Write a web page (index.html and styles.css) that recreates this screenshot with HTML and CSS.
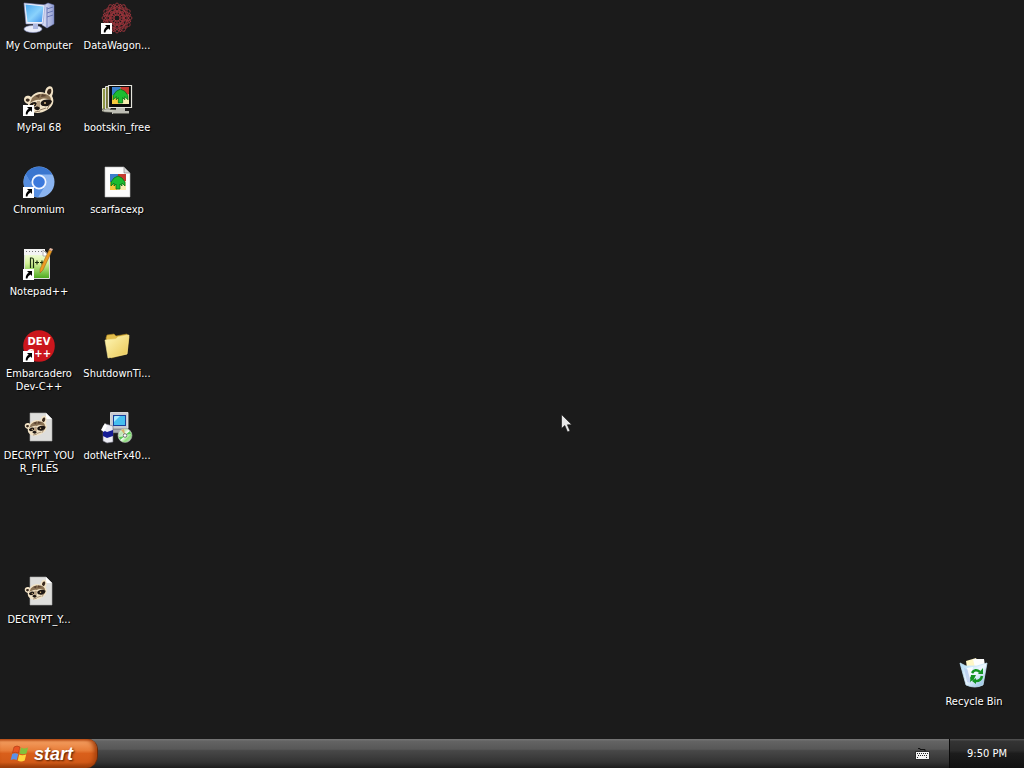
FILE: index.html
```html
<!DOCTYPE html>
<html lang="en">
<head>
<meta charset="utf-8">
<title>Desktop</title>
<link rel="stylesheet" href="styles.css">
</head>
<body>
<svg class="defs" width="0" height="0" aria-hidden="true">
  <defs>
    <linearGradient id="screen" x1="0" y1="0" x2="1" y2="1"><stop offset="0" stop-color="#4aa8f0"/><stop offset=".55" stop-color="#8ad2fc"/><stop offset="1" stop-color="#3f90ea"/></linearGradient>
    <linearGradient id="case" x1="0" y1="0" x2="1" y2="0"><stop offset="0" stop-color="#e8ebfa"/><stop offset="1" stop-color="#8f9bd0"/></linearGradient>
    <linearGradient id="folder" x1="0" y1="0" x2="1" y2="1"><stop offset="0" stop-color="#fff8b8"/><stop offset="1" stop-color="#e9c653"/></linearGradient>
    <linearGradient id="note" x1="0" y1="0" x2="0" y2="1"><stop offset="0" stop-color="#fbfff2"/><stop offset=".45" stop-color="#d6f49a"/><stop offset="1" stop-color="#4aa81c"/></linearGradient>
    <linearGradient id="bin" x1="0" y1="0" x2="1" y2="1"><stop offset="0" stop-color="#a9d8f4"/><stop offset=".5" stop-color="#eef8ff"/><stop offset="1" stop-color="#7fb4dc"/></linearGradient>
    <linearGradient id="disc" x1="0" y1="0" x2="1" y2="1"><stop offset="0" stop-color="#fafafa"/><stop offset=".3" stop-color="#b9e6b0"/><stop offset=".5" stop-color="#fff"/><stop offset=".7" stop-color="#8be079"/><stop offset="1" stop-color="#d9c6e8"/></linearGradient>
    <symbol id="shortcut" viewBox="0 0 11 11">
      <path fill="#fff" d="M0 0h11v11H0z"/>
      <path fill="#000" d="M4 2h5v5L7.500 5.500C5.500 6.600 4.800 8 4.400 9.500H2.800C2.600 7 3.500 5 5.700 3.700z"/>
    </symbol>
    <symbol id="raccoon" viewBox="0 0 32 32">
      <path fill="#f2e3c6" d="M22 9C22 4 26 1 29 3 31 6 30 10 29 12 32 17 30 23 24 26 18 30 10 30 7 26 5 24 5 22 5 20 1 19 0 15 2 13 4 11 7 12 8 13 12 8 17 7 22 9z"/>
      <path fill="#3a2a1e" d="M24 9C24 6 26 4 28 5 29 7 28 10 26 11zM3 17C2 15 4 14 6 15L7 16 5 18z"/>
      <path fill="#8b7355" d="M9 14C14 9 21 9 25 11 28 13 28 15 28 17 24 14 20 14 17 16 14 15 10 17 7 19z"/>
      <path fill="#594230" d="M12 12 17 10 16 14zM19 10 24 12 18 13z"/>
      <path fill="#1d1612" d="M18 18C21 15 26 15 29 17 28 21 25 23 21 22 18 22 17 20 18 18zM7 20C9 18 12 17 14 19 14 22 11 23 9 23 7 22 6 21 7 20z"/>
      <circle cx="22" cy="19" r="1" fill="#d9b782"/><circle cx="11" cy="20.500" r=".8" fill="#d9b782"/>
      <path fill="#b7a082" d="M14 17H17L17 23H13z"/>
      <path fill="#1d1612" d="M11 24C12 22 16 22 17 24 16 27 13 27 11 24z"/>
      <path stroke="#77604a" fill="none" stroke-width=".8" d="M17 26 23 24M12 28 17 27M27 20 24 25"/>
    </symbol>
    <symbol id="decrypt" viewBox="0 0 32 32">
      <path fill="#dededc" stroke="#aaa" stroke-width=".600" d="M7 1h16l6 6v22H7z"/>
      <path fill="#fff" d="M23 1v6h6z"/>
      <use href="#raccoon" x="1" y="2" width="24" height="24"/>
    </symbol>
    <symbol id="tree" viewBox="0 0 16 16">
      <path fill="#f7edb0" d="M0 0h16v16H0z"/>
      <path fill="#3b7fcc" d="M0 0h8v8H0z"/><path fill="#c43b30" d="M8 0h8v7H8z"/><path fill="#f5c93c" d="M0 8h7v8H0z"/>
      <path fill="#1cbc30" stroke="#087318" stroke-width=".800" d="M8 2 12 4 15 8 15 12 12 9 12 12 10 10V15H6V10L4 12 4 9 1 12 1 8 4 4z"/>
    </symbol>
  </defs>
</svg>

<main class="desktop">
  <button class="shortcut c1 r1">
    <svg class="icon" viewBox="0 0 32 32">
      <path fill="url(#case)" stroke="#6874b0" stroke-width=".500" d="M19 4 25 1 31 3V22L24 26 19 23z"/>
      <path stroke="#6a78b8" stroke-width="1" fill="none" d="M24 7 30 5M24 11 30 9M24 15 30 13M24 5V25"/>
      <path fill="#edf0fb" stroke="#8792c8" stroke-width=".600" d="M1 1 22 3 20 22 3 22z"/>
      <path fill="url(#screen)" d="M2.500 2.500 20.500 4.500 18.800 20 4.500 20z"/>
      <ellipse cx="10" cy="27" rx="9" ry="3.500" fill="#e9ecf9" stroke="#8b95c5" stroke-width=".600"/>
      <path fill="#aeb9e2" d="M10 22h5v5h-5z"/>
    </svg>
    <span class="label">My Computer</span>
  </button>
  <button class="shortcut c2 r1">
    <svg class="icon" viewBox="0 0 32 32">
      <g fill="none" stroke="#98343b" stroke-width=".900">
        <g id="petals"><ellipse cx="16" cy="8" rx="3" ry="7"/><ellipse cx="16" cy="24" rx="3" ry="7"/><ellipse cx="8" cy="16" rx="7" ry="3"/><ellipse cx="24" cy="16" rx="7" ry="3"/></g>
        <use href="#petals" transform="rotate(30 16 16)"/>
        <use href="#petals" transform="rotate(60 16 16)"/>
        <g id="squares"><path d="M6 6H26V26H6zM10 10H22V22H10z"/></g>
        <use href="#squares" transform="rotate(30 16 16)"/>
        <use href="#squares" transform="rotate(60 16 16)"/>
      </g>
      <circle cx="16" cy="16" r="3" fill="#1b1b1b" stroke="#98343b"/>
      <use href="#shortcut" x="0" y="21" width="11" height="11"/>
    </svg>
    <span class="label">DataWagon...</span>
  </button>

  <button class="shortcut c1 r2">
    <svg class="icon" viewBox="0 0 32 32"><use href="#raccoon" width="32" height="32"/><use href="#shortcut" x="0" y="21" width="11" height="11"/></svg>
    <span class="label">MyPal 68</span>
  </button>
  <button class="shortcut c2 r2">
    <svg class="icon" viewBox="0 0 32 32">
      <path fill="#8d9644" stroke="#e9e9cf" d="M1.500 4.500H7V27H1.500z"/>
      <path fill="#c8c8bc" stroke="#4e4e45" stroke-width=".600" d="M1 25 20 26 20 29 3 28z"/>
      <path fill="#77793c" stroke="#ddd" d="M4.500 2.500H9V25H4.500z"/>
      <path fill="#0a0a0a" stroke="#e4e4dc" stroke-width="1.200" d="M7.500 1.500H30.500V23.500H7.500z"/>
      <use href="#tree" x="11" y="3" width="17" height="17"/>
      <path fill="#bdbdb4" d="M15 24h9v3h4v3H11v-3h4z"/><path stroke="#66665e" d="M12 29.500h16"/>
    </svg>
    <span class="label">bootskin_free</span>
  </button>

  <button class="shortcut c1 r3">
    <svg class="icon" viewBox="0 0 32 32">
      <circle cx="16" cy="16" r="15.500" fill="#8ab4f0"/>
      <path fill="#3a76cf" d="M2.600 8.200A15.500 15.500 0 0 1 29.400 8.500H16A7.500 7.500 0 0 0 9 13.500L8.500 18z"/>
      <path fill="#568ee0" d="M2.600 8.200A15.500 15.500 0 0 0 15 31.500L22 20 10 20z"/>
      <circle cx="16" cy="16" r="7.500" fill="#f0f5ff"/><circle cx="16" cy="16" r="5.800" fill="#3b79dc"/>
      <use href="#shortcut" x="0" y="21" width="11" height="11"/>
    </svg>
    <span class="label">Chromium</span>
  </button>
  <button class="shortcut c2 r3">
    <svg class="icon" viewBox="0 0 32 32">
      <path fill="#fdfdfd" stroke="#b9b9b9" stroke-width=".600" d="M4 1h19l6 6v24H4z"/>
      <path fill="#dadada" stroke="#777" stroke-width=".600" d="M23 1v6h6z"/>
      <use href="#tree" x="9" y="8" width="16" height="16"/>
    </svg>
    <span class="label">scarfacexp</span>
  </button>

  <button class="shortcut c1 r4">
    <svg class="icon" viewBox="0 0 32 32">
      <path fill="url(#note)" stroke="#ddd" d="M1.500 2.500H21L26.500 8V30.500H1.500z"/>
      <path fill="#f4f4f4" d="M1 1h21v6H1z"/><path stroke="#777" stroke-dasharray="1 2" d="M3 3.500h20"/>
      <path fill="#fff" stroke="#888" stroke-width=".600" d="M20 2v6h6z"/>
      <path fill="none" stroke="#1b300f" stroke-width="1.200" d="M7.500 20V10H9Q10.500 10 10.500 12V20M12 14.500h4M14 12.500v4M17 14.500h4M19 12.500v4"/>
      <path fill="#ed9c23" stroke="#8c611e" stroke-width=".500" d="M26 2 29 3 20 22 17 25 17 21z"/><path fill="#e8b8a0" d="M26 2 27 0 30 1 29 3z"/>
      <use href="#shortcut" x="0" y="21" width="11" height="11"/>
    </svg>
    <span class="label">Notepad++</span>
  </button>

  <button class="shortcut c1 r5">
    <svg class="icon" viewBox="0 0 32 32">
      <circle cx="16" cy="16" r="15.800" fill="#cb161d"/>
      <text class="dev" x="16" y="15" text-anchor="middle">DEV</text>
      <text class="dev" x="16" y="27" text-anchor="middle">C++</text>
      <use href="#shortcut" x="0" y="21" width="11" height="11"/>
    </svg>
    <span class="label">Embarcadero Dev-C++</span>
  </button>
  <button class="shortcut c2 r5">
    <svg class="icon" viewBox="0 0 32 32">
      <path fill="#e2bd4b" stroke="#a98322" stroke-width=".600" d="M5 8 6 5 13 4 15 6 26 4 28 7 26 24 10 28z"/>
      <path fill="url(#folder)" stroke="#f8e99a" stroke-width=".600" d="M4 10 15 9 17 7 28 5 26 24 7 28z"/>
    </svg>
    <span class="label">ShutdownTi...</span>
  </button>

  <button class="shortcut c1 r6">
    <svg class="icon" viewBox="0 0 32 32"><use href="#decrypt" width="32" height="32"/></svg>
    <span class="label">DECRYPT_YOU<br>R_FILES</span>
  </button>
  <button class="shortcut c2 r6">
    <svg class="icon" viewBox="0 0 32 32">
      <path fill="#c9cbd2" stroke="#f0f0f0" stroke-width=".800" d="M9.500 .500H27V16.500H9.500z"/>
      <path fill="#1a3f9a" d="M12 3h13v11H12z"/><path fill="#46bff0" d="M13 4h11v9H13z"/><path fill="#a9e9ff" d="M14 4h5l-6 6V5z"/>
      <path fill="#a9abb2" stroke="#4a4a55" stroke-width=".600" d="M8 17h20v4H8z"/>
      <path fill="#ececf3" stroke="#6b6b78" stroke-width=".600" d="M2 14 5 12 12 14V30L6 31 2 29z"/>
      <path fill="#151c94" d="M2 18 6 20 12 18V24L6 26 2 24z"/><path fill="#fff" d="M0 18 4 11 6 14 3 20z"/>
      <circle cx="24" cy="23.500" r="7" fill="url(#disc)" stroke="#a8a8a8" stroke-width=".600"/>
      <path fill="#59c957" d="M24 23 29 19 30 22zM24 24 19 28 18 25z"/><path fill="#d8b068" d="M24 23 20 18 23 17z"/>
      <circle cx="24" cy="23.500" r="1.800" fill="#fff" stroke="#555" stroke-width=".800"/>
    </svg>
    <span class="label">dotNetFx40...</span>
  </button>

  <button class="shortcut c1 r8">
    <svg class="icon" viewBox="0 0 32 32"><use href="#decrypt" width="32" height="32"/></svg>
    <span class="label">DECRYPT_Y...</span>
  </button>

  <button class="shortcut c4 r9">
    <svg class="icon" viewBox="0 0 32 32">
      <path fill="#fff7c5" d="M8 3 18 0 22 8 9 10z"/><path fill="#fdfdfd" d="M15 1 26 1 27 8 17 10z"/>
      <path fill="url(#bin)" stroke="#c9e6f6" stroke-width=".800" d="M2 5 8 8 19 8 29 5 25 27Q17 31 8 27z"/>
      <path fill="#b5c8ed" opacity=".7" d="M6 10 13 13 13 25 9 24z"/><path fill="#fff" opacity=".8" d="M9 10 15 9 12 21z"/>
      <g fill="none" stroke="#139322" stroke-width="2.600"><path d="M14 15Q17 10 22 14M24 18Q23 23 18 23M15 22 13 19"/></g>
      <path fill="#139322" d="M20 16 25 16 25 10zM13 17 18 17 16 21 12 24zM18 20V26L14 23z"/>
    </svg>
    <span class="label">Recycle Bin</span>
  </button>

  <svg class="cursor" viewBox="0 0 12 20" aria-hidden="true"><path fill="#e8e8e8" stroke="#111" stroke-width=".600" d="M.500 .500V14.500L3.800 11.500 6.500 18 9 17 6.400 10.800H10.800z"/></svg>
</main>

<footer class="taskbar">
  <button class="start">
    <svg class="flag" viewBox="0 0 20 18" aria-hidden="true">
      <path fill="#e85422" stroke="#9a3410" stroke-width=".5" d="M4 2Q7 0 10 2L8.500 8Q5.500 6.500 2.500 8z"/>
      <path fill="#83c13c" d="M11 2.500Q14 4.500 18 2.500L16.500 8.500Q13 10 9.500 8.500z"/>
      <path fill="#5b91e8" d="M2.200 9Q5 7.500 8.200 9L6.700 15Q3.500 13.500 .700 15z"/>
      <path fill="#ffd43c" d="M9.200 9.500Q12 11 16.200 9.500L14.700 15.500Q11 17.500 7.700 15.500z"/>
    </svg>
    <span>start</span>
  </button>
  <button class="keyboard" aria-label="Keyboard">
    <svg viewBox="0 0 15 13" aria-hidden="true">
      <path fill="none" stroke="#111" d="M3 1.500h2v1h5v2"/>
      <path fill="#f4f4f4" stroke="#111" stroke-width=".800" d="M.500 4.500h14v8H.500z"/>
      <path stroke="#222" stroke-dasharray="1 1" d="M2 6.500h11M3 8.500h10M2 10.500h2M11 10.500h2"/>
    </svg>
  </button>
  <time class="tray">9:50 PM</time>
</footer>
</body>
</html>
```
FILE: styles.css
```css
* {
  box-sizing: border-box;
}

body {
  margin: 0;
  min-height: 100vh;
  display: flex;
  flex-direction: column;
  background: #1b1b1b;
  color: #fff;
  font: 11px/13px Tahoma, "DejaVu Sans Condensed", "DejaVu Sans", sans-serif;
}

button {
  margin: 0;
  padding: 0;
  border: 0;
  background: none;
  color: inherit;
  font: inherit;
}

.defs {
  position: absolute;
}

.desktop {
  position: relative;
  flex: 1;
  display: grid;
  grid-template-columns: 78px 78px 1fr 78px;
  grid-template-rows: repeat(9, 82px);
  padding-right: 11px;
}

.shortcut {
  display: flex;
  flex-direction: column;
  align-items: center;
  gap: 5px;
  padding-top: 2px;
}

.icon {
  flex: none;
  width: 32px;
  height: 32px;
}

.label {
  text-align: center;
  text-shadow: 1px 1px 1px #000;
}

.dev {
  fill: #fff;
  font: bold 10px "DejaVu Sans", sans-serif;
}

.c1 { grid-column: 1; }
.c2 { grid-column: 2; }
.c4 { grid-column: 4; }
.r1 { grid-row: 1; }
.r2 { grid-row: 2; }
.r3 { grid-row: 3; }
.r4 { grid-row: 4; }
.r5 { grid-row: 5; }
.r6 { grid-row: 6; }
.r8 { grid-row: 8; }
.r9 { grid-row: 9; }

.cursor {
  position: absolute;
  left: 561px;
  top: 414px;
  width: 12px;
  height: 20px;
}

.taskbar {
  display: flex;
  height: 29px;
  background: linear-gradient(#777 0, #636363 8%, #585858 35%, #484848 40%, #333 80%, #1d1d1d 100%);
}

.start {
  display: flex;
  align-items: center;
  gap: 4px;
  width: 98px;
  padding-left: 10px;
  border-right: 1px solid #6b2a08;
  border-radius: 0 10px 12px 0;
  background: linear-gradient(#c4561c 0, #f29a5c 10%, #e77c38 40%, #d95f1b 50%, #d25a18 80%, #8f3808 100%);
  box-shadow: inset -3px 0 4px #a8420d;
  font: italic bold 18px/20px "Liberation Sans", sans-serif;
  text-shadow: 1px 1px 2px #4a1c00;
}

.flag {
  width: 20px;
  height: 18px;
}

.keyboard {
  margin-left: auto;
  padding: 0 19px 0 0;
}

.keyboard svg {
  display: block;
  width: 15px;
  height: 13px;
}

.tray {
  display: flex;
  align-items: center;
  justify-content: center;
  width: 75px;
  border-left: 1px solid #0a0a0a;
  background: linear-gradient(#555 0, #343434 8%, #2b2b2b 40%, #1c1c1c 50%, #111 100%);
}
```
